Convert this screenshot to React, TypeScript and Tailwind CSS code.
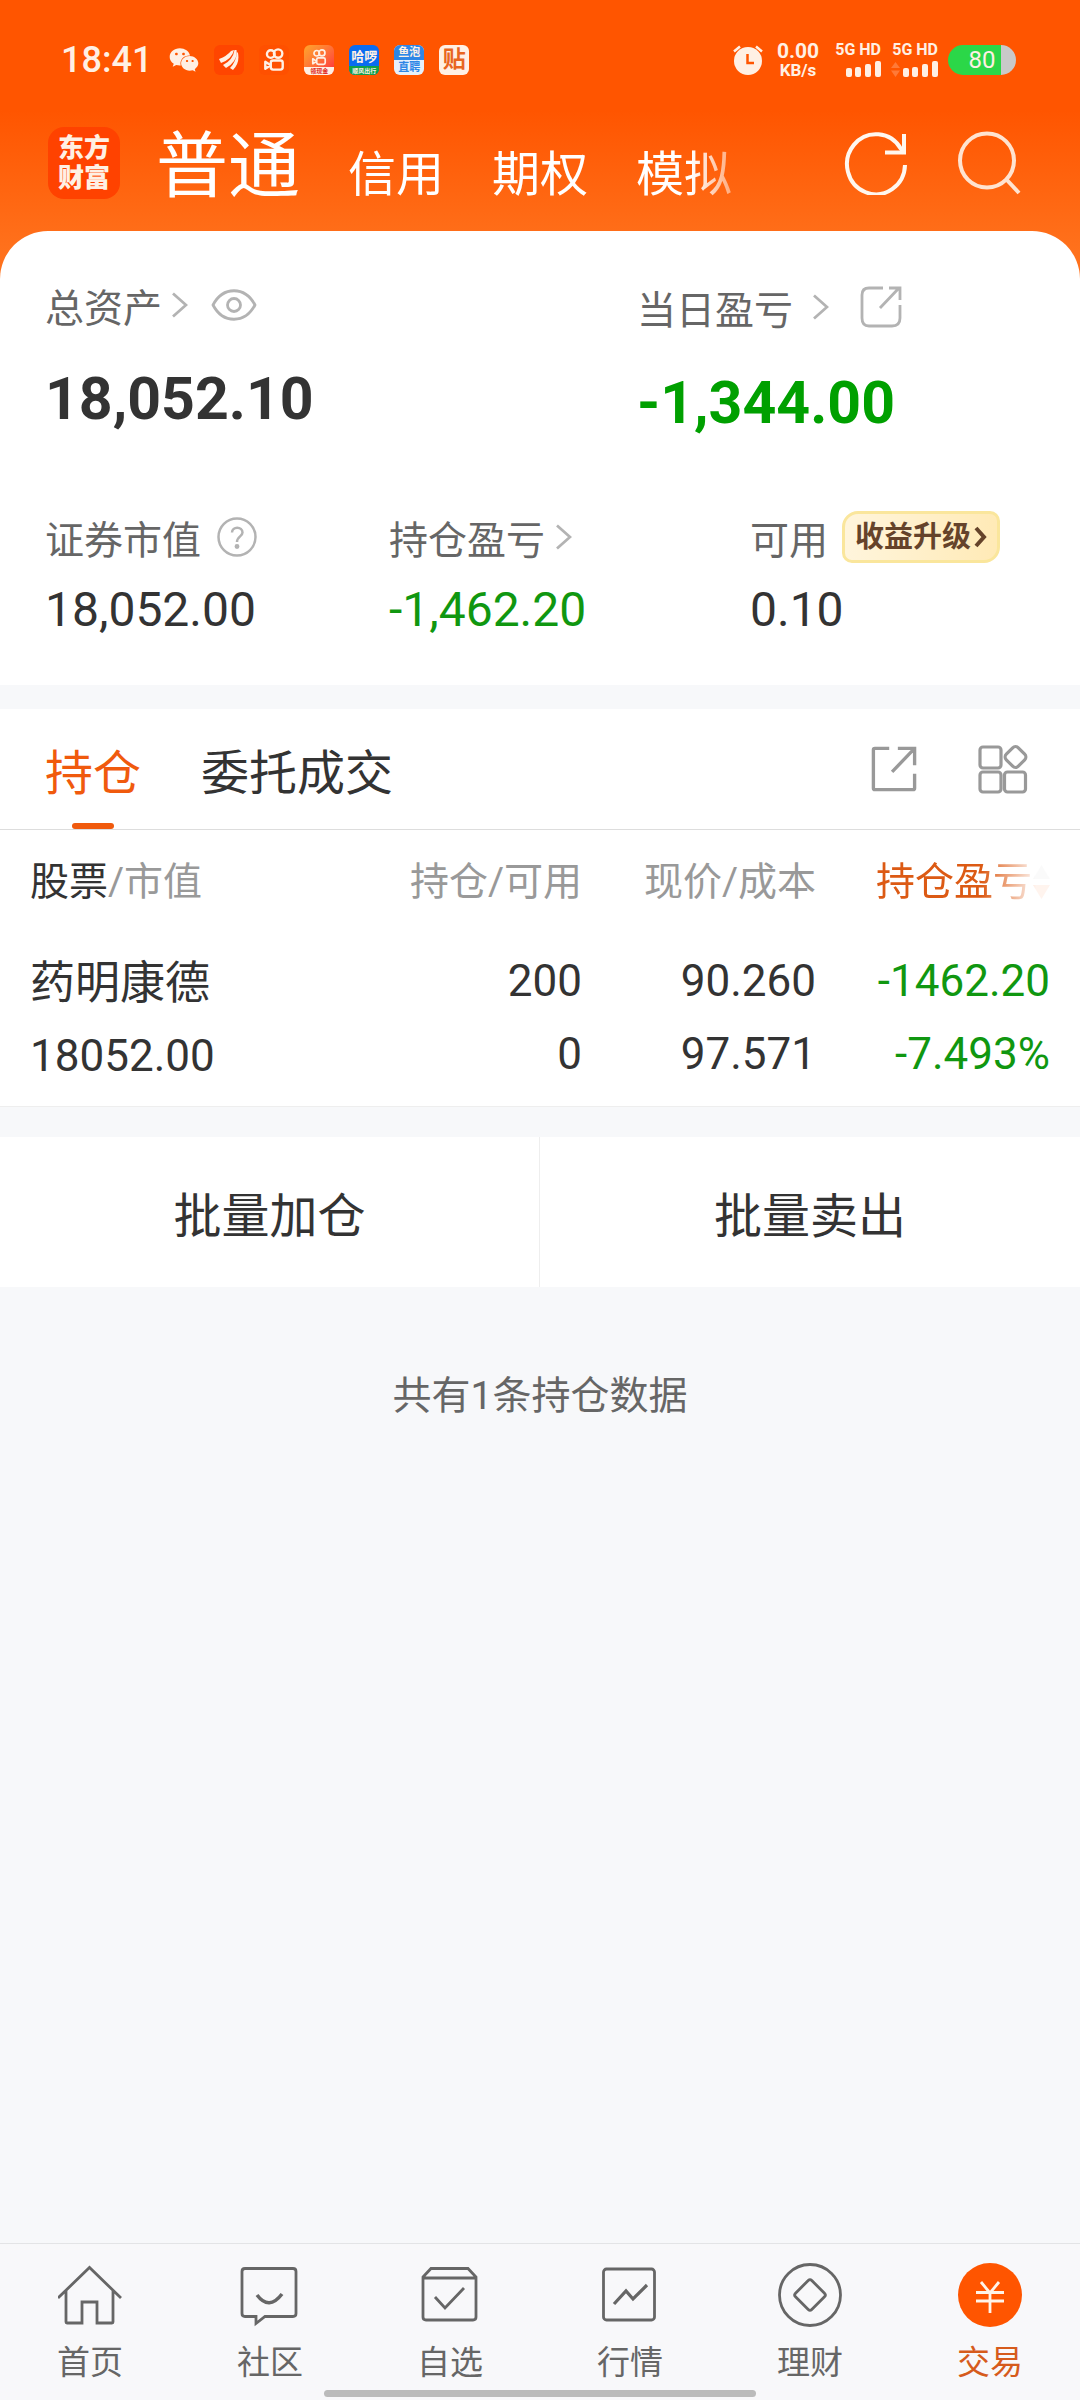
import type { ReactNode } from 'react'
import { FaWeixin } from 'react-icons/fa'

const ACCOUNT_TABS = ['信用', '期权', '模拟']

const HOLDINGS = [
  {
    name: '药明康德',
    value: '18052.00',
    amount: '200',
    available: '0',
    price: '90.260',
    cost: '97.571',
    profit: '-1462.20',
    rate: '-7.493%',
  },
]

function Kuaishou({ className }: { className: string }) {
  return (
    <svg viewBox="0 0 24 26" className={className} fill="none" stroke="#fff0e4" strokeWidth="2.6" aria-hidden="true">
      <circle cx="8.5" cy="6.5" r="4.2" />
      <circle cx="16.5" cy="6" r="4.6" />
      <rect x="8.5" y="13.5" width="13" height="10" rx="2.5" />
      <path d="M8 18.5 2.5 15v7.5L8 19" strokeLinejoin="round" />
    </svg>
  )
}

function SignalBars({ data }: { data?: boolean }) {
  return (
    <div className="flex flex-col items-end gap-1">
      <span className="text-[16px] leading-[14px] font-bold whitespace-nowrap">5G HD</span>
      <svg viewBox="0 0 48 16" className="h-4 w-12" fill="#fff0e4" aria-hidden="true">
        {data && <path d="M1 7 5.500 1 10 7ZM1 9.500h9L5.500 16Z" fill="#ff7a38" />}
        <rect x="13" y="7" width="6" height="9" rx="2" />
        <rect x="22" y="6" width="6" height="10" rx="2" />
        <rect x="32" y="3" width="6" height="13" rx="2" />
        <rect x="42" y="0" width="6" height="16" rx="2" />
      </svg>
    </div>
  )
}

function StatusBar() {
  return (
    <div className="flex h-[120px] items-center justify-between pr-16 pl-[61px] text-[#fff0e4]">
      <div className="flex items-center gap-[15px]">
        <span className="mr-0.5 text-[36px] leading-[40px] font-medium">18:41</span>
        <FaWeixin className="size-[30px]" />
        <span className="flex size-[30px] items-center justify-center rounded-md bg-[#ff4500]">
          <svg viewBox="0 0 20 20" className="size-5" fill="#fff0e4" aria-hidden="true">
            <path d="M0 9Q8 6 12 1L15 0Q13 9 2 13ZM4 15Q14 10 15.500 0L17.500 0Q19 11 7 18ZM11 18Q17 12 18 2L19 3Q21 13 14 20Z" />
          </svg>
        </span>
        <span className="flex size-[30px] items-center justify-center rounded-md bg-[#ff5000]">
          <Kuaishou className="h-6 w-[22px]" />
        </span>
        <span className="flex size-[30px] flex-col items-center justify-between overflow-hidden rounded-md bg-linear-to-br from-[#ffa52b] to-[#ff1a3d] pt-1">
          <Kuaishou className="h-[17px] w-4" />
          <span className="w-full bg-[#fff0e4] text-center text-[6px] leading-[8px] font-bold text-[#e02a20]">领现金</span>
        </span>
        <span className="flex size-[30px] flex-col items-center justify-between overflow-hidden rounded-md bg-[#0a6cf0] pt-1">
          <span className="text-[13px] leading-[15px] font-bold">哈啰</span>
          <span className="w-full bg-[#11a04a] text-center text-[6px] leading-[9px] font-bold">顺风出行</span>
        </span>
        <span className="flex size-[30px] flex-col overflow-hidden rounded-md bg-[#e6f1fc] text-center text-[11px] leading-[15px] font-bold">
          <span className="bg-[#2e86e6]">鱼泡</span>
          <span className="text-[#2e86e6]">直聘</span>
        </span>
        <span className="flex size-[30px] items-center justify-center rounded-md bg-[#fff0e4] text-[23px] leading-[30px] font-bold text-[#e8651f]">
          贴
        </span>
      </div>

      <div className="flex items-center">
        <svg viewBox="0 0 30 30" className="mr-[14px] size-[30px]" aria-hidden="true">
          <circle cx="15" cy="16" r="14" fill="#fff0e4" />
          <path d="M1 6.500 7 1.500M29 6.500 23 1.500" stroke="#fff0e4" strokeWidth="2.500" />
          <path d="M14.500 9v9h6.500" fill="none" stroke="#ff5500" strokeWidth="2.500" />
        </svg>
        <div className="mr-[14px] flex w-[42px] flex-col items-center gap-px font-bold">
          <span className="text-[21px] leading-[18px]">0.00</span>
          <span className="text-[17px] leading-[18px]">KB/s</span>
        </div>
        <div className="mr-[10px] flex gap-[9px]">
          <SignalBars />
          <SignalBars data />
        </div>
        <div className="flex h-[30px] w-[68px] items-center justify-center rounded-full bg-linear-to-r from-[#2bd748] from-78% to-[#c9c9c9] to-78% text-[24px] leading-[30px]">
          80
        </div>
      </div>
    </div>
  )
}

function AccountHeader() {
  return (
    <header className="flex h-[111px] items-start pr-[58px] pl-12 text-white">
      <div className="flex h-[86px] w-full items-center">
        <div className="flex size-[72px] shrink-0 flex-col items-center justify-center rounded-2xl bg-[#ff4200] text-[26px] leading-[30px] font-black text-[#fff0e4]">
          <span>东方</span>
          <span>财富</span>
        </div>
        <nav className="ml-9 flex flex-1 items-baseline gap-12 self-start pt-0.5 whitespace-nowrap [mask-image:linear-gradient(to_right,#000_535px,transparent_610px)]">
          <button className="text-[72px] leading-[90px]">普通</button>
          {ACCOUNT_TABS.map((tab) => (
            <button key={tab} className="text-5xl">
              {tab}
            </button>
          ))}
        </nav>
        <button aria-label="刷新" className="mr-[50px] shrink-0">
          <svg viewBox="0 0 64 64" className="size-16" fill="none" stroke="#fff7ef" strokeWidth="4">
            <path d="M61 34A29 30 0 1 1 57 18L60 22" />
            <path d="M60 3v18.500H41" />
          </svg>
        </button>
        <button aria-label="搜索" className="shrink-0">
          <svg viewBox="0 0 64 64" className="size-16" fill="none" stroke="#ffe3d0" strokeWidth="4">
            <circle cx="29" cy="29.500" r="27" />
            <path d="M48 48 61 62" />
          </svg>
        </button>
      </div>
    </header>
  )
}

function Chevron() {
  return (
    <svg viewBox="0 0 16 26" className="mb-2 h-[26px] w-4 shrink-0" fill="none" stroke="#b3b3b3" strokeWidth="2.800" aria-hidden="true">
      <path d="M1 1.500 14 13 1 24.500" />
    </svg>
  )
}

function Metric({ label, value, down }: { label: ReactNode; value: string; down?: boolean }) {
  return (
    <div className="flex flex-col gap-[17px]">
      <div className="flex h-12 items-center">{label}</div>
      <span className={down ? 'text-5xl/[56px] text-[#109710]' : 'text-5xl/[56px] text-[#333333]'}>{value}</span>
    </div>
  )
}

function AssetSummary() {
  return (
    <section className="rounded-t-[48px] bg-white px-[45px] pt-[54px] pb-[47px] text-[39px] leading-[48px] text-[#666666]">
      <div className="grid grid-cols-[592fr_398fr]">
        <div className="flex flex-col gap-[30px]">
          <div className="flex h-12 items-center">
            <button className="flex items-center gap-[10px]">
              总资产
              <Chevron />
            </button>
            <button aria-label="隐藏金额" className="ml-[23px]">
              <svg viewBox="0 0 46 32" className="mb-2 h-8 w-[46px]" fill="none" stroke="#b3b3b3" strokeWidth="2.800">
                <path d="M2 16C12-3 34-3 44 16 34 35 12 35 2 16Z" strokeLinejoin="round" />
                <circle cx="23" cy="16" r="6.500" />
              </svg>
            </button>
          </div>
          <span className="text-[59px] leading-[72px] font-bold text-[#333333]">18,052.10</span>
        </div>
        <div className="flex flex-col gap-[30px]">
          <div className="flex h-[52px] items-center">
            <button className="flex items-center gap-5">
              当日盈亏
              <Chevron />
            </button>
            <button aria-label="分享" className="ml-[31px]">
              <svg viewBox="0 0 42 42" className="mb-2 size-[42px]" fill="none" stroke="#b3b3b3" strokeWidth="2.800">
                <path d="M23 2H9Q2 2 2 9v23q0 8 7 8h23q8 0 8-8V19M20 22 39 2M29 2h11v12" />
              </svg>
            </button>
          </div>
          <span className="text-[59px] leading-[72px] font-bold text-[#00a000]">-1,344.00</span>
        </div>
      </div>

      <div className="mt-[78px] grid grid-cols-[344fr_361fr_285fr]">
        <Metric
          label={
            <button className="flex items-center gap-4 whitespace-nowrap">
              证券市值
              <svg viewBox="0 0 40 40" className="mb-2 size-10" fill="none" stroke="#b3b3b3" strokeWidth="2.500" aria-hidden="true">
                <circle cx="20" cy="20" r="18.500" />
                <path d="M15 15.500C15 9 25.500 9 25.500 15.500 25.500 19.500 20 19.500 20 25" />
                <circle cx="20" cy="29.500" r="1.200" fill="#b3b3b3" />
              </svg>
            </button>
          }
          value="18,052.00"
        />
        <Metric
          label={
            <button className="flex items-center gap-[11px] whitespace-nowrap">
              持仓盈亏
              <Chevron />
            </button>
          }
          value="-1,462.20"
          down
        />
        <Metric
          label={
            <>
              可用
              <button className="mb-2 ml-[14px] flex h-[52px] items-center gap-[3px] rounded-tl-2xl rounded-tr-[10px] rounded-br-2xl rounded-bl-[10px] border-[3px] border-[#fae69c] bg-linear-to-r from-[#fff5dc] to-[#ffeab6] px-[10px] text-[29px] font-bold whitespace-nowrap text-[#65432a]">
                收益升级
                <svg viewBox="0 0 13 22" className="h-[22px] w-[13px]" fill="none" stroke="#65432a" strokeWidth="4" aria-hidden="true">
                  <path d="M2 2 10 11 2 20" />
                </svg>
              </button>
            </>
          }
          value="0.10"
        />
      </div>
    </section>
  )
}

function HoldingTabs() {
  return (
    <div className="flex h-[121px] items-center border-b border-[#dddddd] pr-[52px] pl-[45px] text-5xl text-[#333333]">
      <button className="relative h-full pt-2.5 text-[#f05a0d]">
        持仓
        <span className="absolute bottom-0 left-1/2 h-[6px] w-[42px] -translate-x-1/2 rounded-full bg-[#f05a0d]" />
      </button>
      <button className="ml-[60px] h-full pt-2.5">委托成交</button>
      <button aria-label="分享持仓" className="ml-auto">
        <svg viewBox="0 0 48 48" className="size-[46px]" fill="none" stroke="#999999" strokeWidth="3.500">
          <path d="M19 2.500H4Q2.500 2.500 2.500 4v40q0 1.500 1.500 1.500h40q1.500 0 1.500-1.500V29M22 27 45 3M28 2.500h17.500V20" />
        </svg>
      </button>
      <button aria-label="更多功能" className="ml-[61px]">
        <svg viewBox="0 0 50 50" className="size-[50px]" fill="none" stroke="#999999" strokeWidth="3.200">
          <rect x="2" y="3" width="21" height="21" rx="3" />
          <rect x="2" y="28" width="21" height="20" rx="3" />
          <rect x="26.500" y="28" width="21" height="20" rx="3" />
          <rect x="29" y="4.500" width="17" height="17" rx="4" transform="rotate(45 37.500 13)" />
        </svg>
      </button>
    </div>
  )
}

function HoldingTable() {
  return (
    <table className="w-full table-fixed border-b border-[#eeeeee] text-[44px] leading-[73px] text-[#333333]">
      <thead className="text-[39px] leading-[48px] text-[#999999]">
        <tr>
          <th className="pt-7 pl-[30px] text-left font-normal">
            <span className="text-[#333333]">股票</span>/市值
          </th>
          <th className="w-[234px] pt-7 text-right font-normal">持仓/可用</th>
          <th className="w-[234px] pt-7 text-right font-normal">现价/成本</th>
          <th className="w-[264px] pt-7 pr-[30px] font-normal">
            <button className="ml-auto flex items-center gap-px whitespace-nowrap text-[#dc5a14] [mask-image:linear-gradient(to_right,#000_105px,#0001_160px)]">
              持仓盈亏
              <svg viewBox="0 0 17 34" className="h-[34px] w-[17px]" aria-hidden="true">
                <path d="M8.500 0 17 14H0Z" fill="#bbbbbb" />
                <path d="M8.500 34 17 20H0Z" fill="#ff5500" />
              </svg>
            </button>
          </th>
        </tr>
      </thead>
      <tbody>
        {HOLDINGS.map((row) => (
          <tr key={row.name} className="align-top">
            <td className="pt-[41px] pb-[13px] pl-[30px]">
              <div className="text-[45px]">{row.name}</div>
              <div>{row.value}</div>
            </td>
            <td className="pt-[39px] text-right">
              <div>{row.amount}</div>
              <div>{row.available}</div>
            </td>
            <td className="pt-[39px] text-right">
              <div>{row.price}</div>
              <div>{row.cost}</div>
            </td>
            <td className="pt-[39px] pr-[30px] text-right text-[#109710]">
              <div>{row.profit}</div>
              <div>{row.rate}</div>
            </td>
          </tr>
        ))}
      </tbody>
    </table>
  )
}

const NAV_ITEMS = [
  {
    label: '首页',
    icon: <path d="M0 35 31.500 4.500 63 35M8 28v31q0 1 1 1h15V39h15v21h15q1 0 1-1V28" />,
  },
  {
    label: '社区',
    icon: (
      <>
        <path d="M7 5.500h48q3 0 3 3v42q0 3-3 3H27l-9 7v-7H7q-3 0-3-3v-42q0-3 3-3Z" />
        <path d="M19 32Q31 48 44 31" strokeWidth="3.500" />
      </>
    ),
  },
  {
    label: '自选',
    icon: (
      <>
        <path d="M5 14 13 5.500h37l8 8.500v40q0 3-3 3H8q-3 0-3-3ZM5 15h53" />
        <path d="M17 34 27 45 46 25" />
      </>
    ),
  },
  {
    label: '行情',
    icon: (
      <>
        <rect x="5.500" y="6" width="51" height="51" rx="3" />
        <path d="M16 41 28 28 35 36 49 22" strokeWidth="3.200" />
      </>
    ),
  },
  {
    label: '理财',
    icon: (
      <>
        <circle cx="32" cy="32" r="30.500" />
        <rect x="20.500" y="20.500" width="23" height="23" rx="2.500" transform="rotate(45 32 32)" />
      </>
    ),
  },
  {
    label: '交易',
    active: true,
    icon: (
      <>
        <circle cx="32" cy="32" r="32" fill="#ff5500" stroke="none" />
        <path d="M23 19l9 11 9-11M18 29.500h28M18 38h28M32 29v21" stroke="#fff3e8" />
      </>
    ),
  },
]

function BottomNav() {
  return (
    <nav className="mt-auto border-t border-[#e3e4e6] bg-[#f8f8fa] pt-[19px] pb-[3px]">
      <div className="grid grid-cols-6">
        {NAV_ITEMS.map((item) => (
          <a
            key={item.label}
            href="#"
            aria-current={item.active ? 'page' : undefined}
            className="flex flex-col items-center gap-4 text-[33px] leading-10 text-[#666666] aria-[current=page]:text-[#d65b1c]"
          >
            <svg viewBox="0 0 64 64" className="size-16" fill="none" stroke="#666666" strokeWidth="2.800" aria-hidden="true">
              {item.icon}
            </svg>
            {item.label}
          </a>
        ))}
      </div>
      <div className="mx-auto mt-[7px] h-[7px] w-2/5 rounded-full bg-[#bbbbbb]" />
    </nav>
  )
}

export default function App() {
  return (
    <div className="flex min-h-screen flex-col bg-[#f7f8fa] font-[Roboto,'Noto_Sans_CJK_SC',sans-serif]">
      <div className="bg-[linear-gradient(to_bottom,#ff5500_110px,#ff711c_250px)]">
        <StatusBar />
        <AccountHeader />
        <AssetSummary />
      </div>

      <section className="mt-6 bg-white">
        <HoldingTabs />
        <HoldingTable />
      </section>

      <div className="mt-[30px] grid grid-cols-2 divide-x divide-[#eeeeee] bg-white text-5xl text-[#333333]">
        <button className="h-[150px] pt-2.5">批量加仓</button>
        <button className="h-[150px] pt-2.5">批量卖出</button>
      </div>

      <p className="mt-[85px] text-center text-[39px] leading-[48px] text-[#666666]">共有1条持仓数据</p>

      <BottomNav />
    </div>
  )
}
